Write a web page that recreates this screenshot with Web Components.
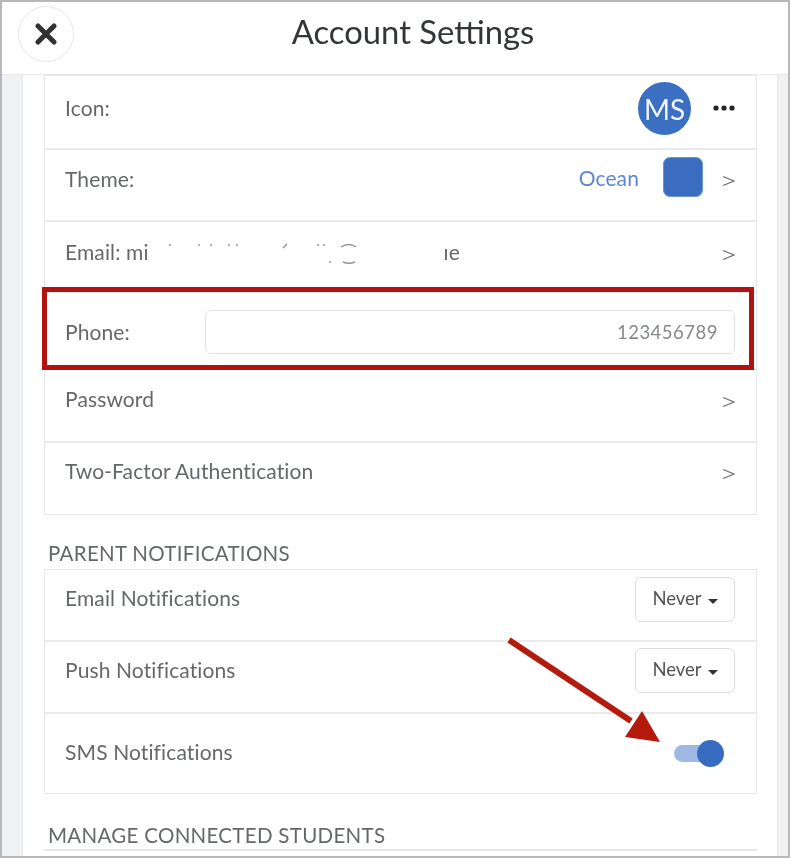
<!DOCTYPE html>
<html>
<head>
<meta charset="utf-8">
<style>
  html, body { margin: 0; height: 100%; background: #fff; }
  body { font-family: "Lato", "Open Sans", sans-serif; color: #5f6265; overflow: hidden; }
</style>
</head>
<body>
<settings-page>
  <sheet-header slot="header">Account Settings</sheet-header>

  <settings-card>
    <settings-row label="Icon:" h="74" top="18">
      <user-avatar style="margin-top:-12px">MS</user-avatar>
      <more-dots style="margin:0 0 0 22px"></more-dots>
    </settings-row>
    <settings-row label="Theme:" h="72" top="15">
      <theme-pick name="Ocean"></theme-pick>
      <row-chevron style="margin-top:-1px"></row-chevron>
    </settings-row>
    <settings-row label="Email: mi" h="71" top="16">
      <redacted-mail slot="after"></redacted-mail>
      <row-chevron></row-chevron>
    </settings-row>
    <settings-row label="Phone:" h="77" top="25" gap="75">
      <phone-field value="123456789"></phone-field>
    </settings-row>
    <settings-row label="Password" h="73" top="15">
      <row-chevron></row-chevron>
    </settings-row>
    <settings-row label="Two-Factor Authentication" h="71" last top="14">
      <row-chevron></row-chevron>
    </settings-row>
  </settings-card>

  <section-label style="--above:24px;--h:30px">PARENT NOTIFICATIONS</section-label>
  <settings-card>
    <settings-row label="Email Notifications" h="72" top="14">
      <never-select></never-select>
    </settings-row>
    <settings-row label="Push Notifications" h="72" top="14">
      <never-select style="margin-top:-8px"></never-select>
    </settings-row>
    <settings-row label="SMS Notifications" h="79" last top="24">
      <switch-toggle></switch-toggle>
    </settings-row>
  </settings-card>

  <section-label style="--above:27px;--h:28px">MANAGE CONNECTED STUDENTS</section-label>
  <settings-card></settings-card>

  <red-callout slot="overlay"></red-callout>
</settings-page>

<script>
class SettingsPage extends HTMLElement {
  constructor() {
    super();
    this.attachShadow({ mode: 'open' });
    this.shadowRoot.innerHTML = `
    <style>
      :host { display: block; position: relative; box-sizing: border-box; width: 790px; height: 858px; border: 2px solid #b9b9b9; overflow: hidden; background: #f0f1f3; }
      .wrap { filter: blur(.4px); height: 100%; position: relative; }
      .body { margin: 0 10px 0 20px; height: 782px; background: #fff; border-left: 1px solid #e4e5e8; border-right: 1px solid #e4e5e8; padding: 0 20px 0 21px; overflow: hidden; box-sizing: border-box; }
    </style>
    <div class="wrap">
      <slot name="header"></slot>
      <div class="body"><slot></slot></div>
      <slot name="overlay"></slot>
    </div>`;
  }
}
customElements.define('settings-page', SettingsPage);

class SheetHeader extends HTMLElement {
  constructor() {
    super();
    this.attachShadow({ mode: 'open' });
    this.shadowRoot.innerHTML = `
    <style>
      :host { display: flex; align-items: center; height: 73px; box-sizing: border-box; background: #fff; border-bottom: 1px solid #e6e7ea; padding: 0 0 0 16px; }
      .close { width: 56px; height: 56px; box-sizing: border-box; border: 1px solid #e3e7ee; border-radius: 50%; display: flex; align-items: center; justify-content: center; margin-top: -9px; }
      h1 { flex: 1; margin: -12px 0 0; padding-right: 36px; text-align: center; font-size: 32.8px; font-weight: 400; color: #333638; line-height: 40px; }
    </style>
    <div class="close">
      <svg width="22" height="22" viewBox="0 0 22 22"><path d="M3 3 19 19M19 3 3 19" stroke="#303234" stroke-width="5" stroke-linecap="round"/></svg>
    </div>
    <h1><slot></slot></h1>`;
  }
}
customElements.define('sheet-header', SheetHeader);

class SettingsCard extends HTMLElement {
  constructor() {
    super();
    this.attachShadow({ mode: 'open' });
    this.shadowRoot.innerHTML = `
    <style>
      :host { display: block; box-sizing: border-box; background: #fff; border: 1px solid #e6e7ea; }
    </style>
    <slot></slot>`;
  }
}
customElements.define('settings-card', SettingsCard);

class SettingsRow extends HTMLElement {
  constructor() {
    super();
    this.attachShadow({ mode: 'open' });
    const h = this.getAttribute('h');
    const top = this.getAttribute('top');
    const gap = this.getAttribute('gap');
    this.shadowRoot.innerHTML = `
    <style>
      :host { display: flex; box-sizing: border-box; height: ${h}px; padding: ${top}px 21px 0 20px; align-items: flex-start; border-bottom: ${this.hasAttribute('last') ? 0 : 2}px solid #e9eaec; font-size: 21px; letter-spacing: .12px; }
      .label { line-height: 28px; color: #65686b; white-space: nowrap; ${gap ? 'width:' + (+gap + 65) + 'px' : ''} }
      .end { margin-left: auto; display: flex; align-items: flex-start; ${gap ? 'flex:1' : ''} }
    </style>
    <span class="label">${this.getAttribute('label')}</span>
    <slot name="after"></slot>
    <div class="end"><slot></slot></div>`;
  }
}
customElements.define('settings-row', SettingsRow);

class SectionLabel extends HTMLElement {
  constructor() {
    super();
    this.attachShadow({ mode: 'open' });
    this.shadowRoot.innerHTML = `
    <style>
      :host { display: block; margin-top: var(--above); margin-left: 4px; height: var(--h); line-height: 28px; font-size: 20.5px; letter-spacing: .3px; color: #65686b; white-space: nowrap; }
    </style>
    <slot></slot>`;
  }
}
customElements.define('section-label', SectionLabel);

class UserAvatar extends HTMLElement {
  constructor() {
    super();
    this.attachShadow({ mode: 'open' });
    this.shadowRoot.innerHTML = `
    <style>
      :host { display: flex; width: 53px; height: 53px; border-radius: 50%; background: #3a6fc2; color: #f2f5fb; align-items: center; justify-content: center; font-size: 28px; letter-spacing: 0; }
    </style>
    <slot></slot>`;
  }
}
customElements.define('user-avatar', UserAvatar);

class MoreDots extends HTMLElement {
  constructor() {
    super();
    this.attachShadow({ mode: 'open' });
    this.shadowRoot.innerHTML = `
    <style>
      :host { display: block; height: 28px; }
      svg { display: block; }
    </style>
    <svg width="22" height="28" viewBox="0 0 22 28"><circle cx="3" cy="14" r="2.6" fill="#222"/><circle cx="11" cy="14" r="2.6" fill="#222"/><circle cx="19" cy="14" r="2.6" fill="#222"/></svg>`;
  }
}
customElements.define('more-dots', MoreDots);

class ThemePick extends HTMLElement {
  constructor() {
    super();
    this.attachShadow({ mode: 'open' });
    this.shadowRoot.innerHTML = `
    <style>
      :host { display: flex; align-items: flex-start; margin-right: 19px; }
      .name { color: #5c86cf; font-size: 21px; line-height: 28px; margin: -1px 24px 0 0; }
      .swatch { width: 40px; height: 40px; box-sizing: border-box; margin-top: -8px; border-radius: 7px; background: #3a6dbf; border: 1px solid #6d95d6; }
    </style>
    <span class="name">${this.getAttribute('name')}</span>
    <div class="swatch"></div>`;
  }
}
customElements.define('theme-pick', ThemePick);

class RowChevron extends HTMLElement {
  constructor() {
    super();
    this.attachShadow({ mode: 'open' });
    this.shadowRoot.innerHTML = `
    <style>
      :host { display: block; height: 28px; padding-top: 3px; }
      svg { display: block; }
    </style>
    <svg width="13" height="28" viewBox="0 0 13 28"><path d="M1 9.5 12 14 1 18.5" fill="none" stroke="#6a6c6f" stroke-width="1.3"/></svg>`;
  }
}
customElements.define('row-chevron', RowChevron);

class RedactedMail extends HTMLElement {
  constructor() {
    super();
    this.attachShadow({ mode: 'open' });
    this.shadowRoot.innerHTML = `
    <style>
      :host { display: flex; align-items: flex-start; margin-left: 10px; }
      svg { display: block; }
      .tail { margin-left: 85px; line-height: 28px; color: #65686b; }
    </style>
    <svg width="200" height="28" viewBox="0 0 200 28" fill="none" stroke="#8f9194" stroke-width="1.4">
      <path d="M11 6v2M40 6v2M52 6v2M70 6v2M78 6v2M124 10l4-4M159 6v2M165 6v2M171 23v2"/>
      <path d="M182 9q8-5 15 0M184 24q6 2.5 12 0"/>
    </svg>
    <span class="tail">ıe</span>`;
  }
}
customElements.define('redacted-mail', RedactedMail);

class PhoneField extends HTMLElement {
  constructor() {
    super();
    this.attachShadow({ mode: 'open' });
    this.shadowRoot.innerHTML = `
    <style>
      :host { display: block; flex: 1; box-sizing: border-box; height: 44px; margin-top: -8px; border: 1px solid #dfe3e8; border-radius: 6px; padding-right: 16px; text-align: right; line-height: 42px; font-size: 18.5px; color: #85888b; letter-spacing: .5px; }
    </style>
    ${this.getAttribute('value')}`;
  }
}
customElements.define('phone-field', PhoneField);

class NeverSelect extends HTMLElement {
  constructor() {
    super();
    this.attachShadow({ mode: 'open' });
    this.shadowRoot.innerHTML = `
    <style>
      :host { display: flex; align-items: center; justify-content: center; gap: 6px; box-sizing: border-box; width: 100px; height: 45px; margin-top: -7px; border: 1px solid #dcdde0; border-radius: 6px; font-size: 18.5px; letter-spacing: 0; color: #515356; }
      span { margin-top: -3px; }
      svg { display: block; margin-top: 3px; }
    </style>
    <span>Never</span>
    <svg width="10" height="5" viewBox="0 0 10 5"><path d="M0 0h10L5 5z" fill="#333"/></svg>`;
  }
}
customElements.define('never-select', NeverSelect);

class SwitchToggle extends HTMLElement {
  constructor() {
    super();
    this.attachShadow({ mode: 'open' });
    this.shadowRoot.innerHTML = `
    <style>
      :host { display: block; position: relative; width: 44px; height: 17px; margin: 7px 17px 0 0; background: #9db8e3; border-radius: 9px; }
      .knob { position: absolute; right: -6px; top: -5px; width: 27px; height: 27px; border-radius: 50%; background: #386cc0; }
    </style>
    <div class="knob"></div>`;
  }
}
customElements.define('switch-toggle', SwitchToggle);

class RedCallout extends HTMLElement {
  constructor() {
    super();
    this.attachShadow({ mode: 'open' });
    this.shadowRoot.innerHTML = `
    <style>
      :host { display: block; }
      .box { position: absolute; left: 40px; top: 285px; width: 712px; height: 83px; box-sizing: border-box; border: 5px solid #b11212; }
      svg { position: absolute; left: 500px; top: 630px; }
    </style>
    <div class="box"></div>
    <svg width="170" height="120" viewBox="0 0 170 120">
      <path d="M7 8 129 89" stroke="#b41b0c" stroke-width="6" fill="none"/>
      <path d="M158 110 123 105 140 79z" fill="#b41b0c"/>
    </svg>`;
  }
}
customElements.define('red-callout', RedCallout);
</script>
</body>
</html>
